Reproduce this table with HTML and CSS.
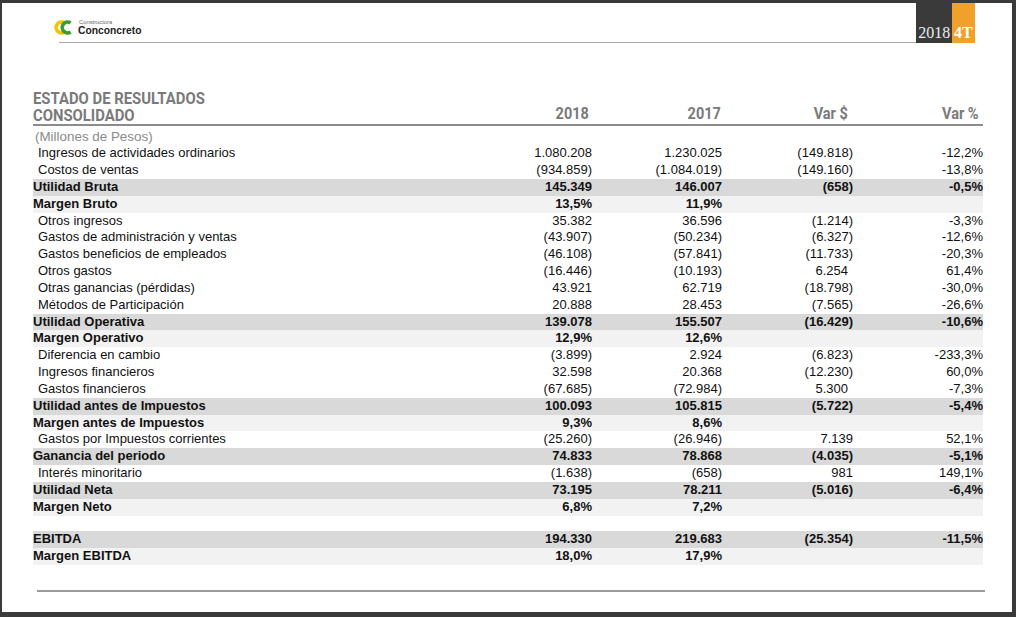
FILE: index.html
```html
<!DOCTYPE html>
<html lang="es">
<head>
<meta charset="utf-8">
<title>Estado de Resultados Consolidado 2018 4T</title>
<link rel="stylesheet" href="styles.css">
</head>
<body>
<div class="page">
  <header class="top">
    <div class="brand">
      <div class="logo">
        <svg class="logo-mark" viewBox="0 0 20 16" width="20" height="17" aria-hidden="true">
          <path d="M10.5 3.5 A5.4 5.4 0 1 0 10.5 12.5" fill="none" stroke="#f2c300" stroke-width="3.6"/>
          <path d="M16.6 3.5 A5.4 5.4 0 1 0 16.6 12.5" fill="none" stroke="#3b9c36" stroke-width="3.6"/>
        </svg>
        <div class="logo-text">
          <span class="logo-small">Constructora</span>
          <span class="logo-name">Conconcreto</span>
        </div>
      </div>
    </div>
    <div class="badge"><span class="badge-year">2018</span><span class="badge-q">4T</span></div>
  </header>

  <section class="report">
    <div class="thead">
      <div class="title"><span>ESTADO DE RESULTADOS<br>CONSOLIDADO</span></div>
      <div class="th c1"><span>2018</span></div>
      <div class="th c2"><span>2017</span></div>
      <div class="th c3"><span>Var $</span></div>
      <div class="th c4"><span>Var %</span></div>
    </div>

    <div class="row note"><span class="label">(Millones de Pesos)</span><span></span><span></span><span></span><span></span></div>
    <div class="row"><span class="label">Ingresos de actividades ordinarios</span><span>1.080.208</span><span>1.230.025</span><span>(149.818)</span><span>-12,2%</span></div>
    <div class="row"><span class="label">Costos de ventas</span><span>(934.859)</span><span>(1.084.019)</span><span>(149.160)</span><span>-13,8%</span></div>
    <div class="row total"><span class="label">Utilidad Bruta</span><span>145.349</span><span>146.007</span><span>(658)</span><span>-0,5%</span></div>
    <div class="row margin"><span class="label">Margen Bruto</span><span>13,5%</span><span>11,9%</span><span></span><span></span></div>
    <div class="row"><span class="label">Otros ingresos</span><span>35.382</span><span>36.596</span><span>(1.214)</span><span>-3,3%</span></div>
    <div class="row"><span class="label">Gastos de administración y ventas</span><span>(43.907)</span><span>(50.234)</span><span>(6.327)</span><span>-12,6%</span></div>
    <div class="row"><span class="label">Gastos beneficios de empleados</span><span>(46.108)</span><span>(57.841)</span><span>(11.733)</span><span>-20,3%</span></div>
    <div class="row"><span class="label">Otros gastos</span><span>(16.446)</span><span>(10.193)</span><span class="pos">6.254</span><span>61,4%</span></div>
    <div class="row"><span class="label">Otras ganancias (pérdidas)</span><span>43.921</span><span>62.719</span><span>(18.798)</span><span>-30,0%</span></div>
    <div class="row"><span class="label">Métodos de Participación</span><span>20.888</span><span>28.453</span><span>(7.565)</span><span>-26,6%</span></div>
    <div class="row total"><span class="label">Utilidad Operativa</span><span>139.078</span><span>155.507</span><span>(16.429)</span><span>-10,6%</span></div>
    <div class="row margin"><span class="label">Margen Operativo</span><span>12,9%</span><span>12,6%</span><span></span><span></span></div>
    <div class="row"><span class="label">Diferencia en cambio</span><span>(3.899)</span><span>2.924</span><span>(6.823)</span><span>-233,3%</span></div>
    <div class="row"><span class="label">Ingresos financieros</span><span>32.598</span><span>20.368</span><span>(12.230)</span><span>60,0%</span></div>
    <div class="row"><span class="label">Gastos financieros</span><span>(67.685)</span><span>(72.984)</span><span class="pos">5.300</span><span>-7,3%</span></div>
    <div class="row total"><span class="label">Utilidad antes de Impuestos</span><span>100.093</span><span>105.815</span><span>(5.722)</span><span>-5,4%</span></div>
    <div class="row margin"><span class="label">Margen antes de Impuestos</span><span>9,3%</span><span>8,6%</span><span></span><span></span></div>
    <div class="row"><span class="label">Gastos por Impuestos corrientes</span><span>(25.260)</span><span>(26.946)</span><span>7.139</span><span>52,1%</span></div>
    <div class="row total"><span class="label">Ganancia del periodo</span><span>74.833</span><span>78.868</span><span>(4.035)</span><span>-5,1%</span></div>
    <div class="row"><span class="label">Interés minoritario</span><span>(1.638)</span><span>(658)</span><span>981</span><span>149,1%</span></div>
    <div class="row total"><span class="label">Utilidad Neta</span><span>73.195</span><span>78.211</span><span>(5.016)</span><span>-6,4%</span></div>
    <div class="row margin"><span class="label">Margen Neto</span><span>6,8%</span><span>7,2%</span><span></span><span></span></div>
    <div class="spacer"></div>
    <div class="row total"><span class="label">EBITDA</span><span>194.330</span><span>219.683</span><span>(25.354)</span><span>-11,5%</span></div>
    <div class="row margin"><span class="label">Margen EBITDA</span><span>18,0%</span><span>17,9%</span><span></span><span></span></div>
  </section>

  <div class="rule"></div>
</div>
</body>
</html>
```

FILE: styles.css
```css
* { box-sizing: border-box; }

html, body { margin: 0; }

body {
  width: 1016px;
  height: 617px;
  overflow: hidden;
  padding: 3px 4px 5px 2px;
  background: #3a3a3a;
  font-family: "Liberation Sans", Arial, sans-serif;
}

.page {
  height: 609px;
  background: #fff;
  display: flex;
  flex-direction: column;
}

/* ---------- header ---------- */
.top {
  display: flex;
  height: 40px;
  padding-left: 57px;
  padding-right: 37px;
}

.brand {
  flex: 1;
  border-bottom: 1.5px solid #ababab;
}

.logo {
  display: flex;
  align-items: flex-start;
  gap: 4px;
  margin-left: -5px;
  padding-top: 16px;
}

.logo-mark { display: block; }

.logo-text {
  display: flex;
  flex-direction: column;
}

.logo-small {
  font-size: 5.8px;
  line-height: 6px;
  color: #666;
  margin-left: 1px;
}

.logo-name {
  font-size: 10.3px;
  line-height: 11px;
  font-weight: 700;
  color: #222;
}

.badge {
  display: flex;
}

.badge-year,
.badge-q {
  display: flex;
  align-items: flex-end;
  justify-content: center;
  font-family: "Liberation Serif", "Times New Roman", serif;
  font-size: 16px;
  line-height: 16px;
  padding-bottom: 2.5px;
}

.badge-year {
  width: 36px;
  background: #3a3a3a;
  color: #ececec;
  padding-left: 1px;
}

.badge-q {
  width: 23.3px;
  background: #f0a12a;
  color: #fff;
  font-weight: 700;
}

/* ---------- report table ---------- */
.report {
  margin: 47px 29px 0 31px;
}

.thead,
.row {
  display: grid;
  grid-template-columns: 429px 130px 130px 131px 130px;
}

.thead {
  align-items: end;
  border-bottom: 2px solid #8c8c8c;
  color: #7a7a7a;
  font-family: Roboto, "Liberation Sans", sans-serif;
  font-weight: 700;
  font-size: 16.5px;
  line-height: 17px;
}

.title span {
  display: inline-block;
  transform: scaleX(0.9);
  transform-origin: left;
  white-space: nowrap;
}

.th {
  text-align: right;
  padding-bottom: 2px;
}

.th span {
  display: inline-block;
  transform: scaleX(0.88);
  transform-origin: right;
}

.th.c1 { padding-right: 3px; }
.th.c2 { padding-right: 1px; }
.th.c3 { padding-right: 5px; }
.th.c4 { padding-right: 4px; }

.row {
  height: 16.83px;
  align-items: center;
  font-size: 13px;
  line-height: 16.83px;
  color: #111;
  white-space: nowrap;
}

.row > span { text-align: right; }
.row > .label { text-align: left; padding-left: 5px; }

.row .pos { padding-right: 5px; }

.row.note {
  margin-top: 2.5px;
  color: #8a8a8a;
  font-size: 13.4px;
}
.row.note .label { padding-left: 2px; }

.row.total {
  background: #d9d9d9;
  font-weight: 700;
}

.row.margin {
  background: #f2f2f2;
  font-weight: 700;
}

.row.total .label,
.row.margin .label { padding-left: 0; }

.spacer { height: 15.7px; }

.rule {
  height: 2px;
  background: #9a9a9a;
  margin: 25px 27px 0 35px;
}
```
